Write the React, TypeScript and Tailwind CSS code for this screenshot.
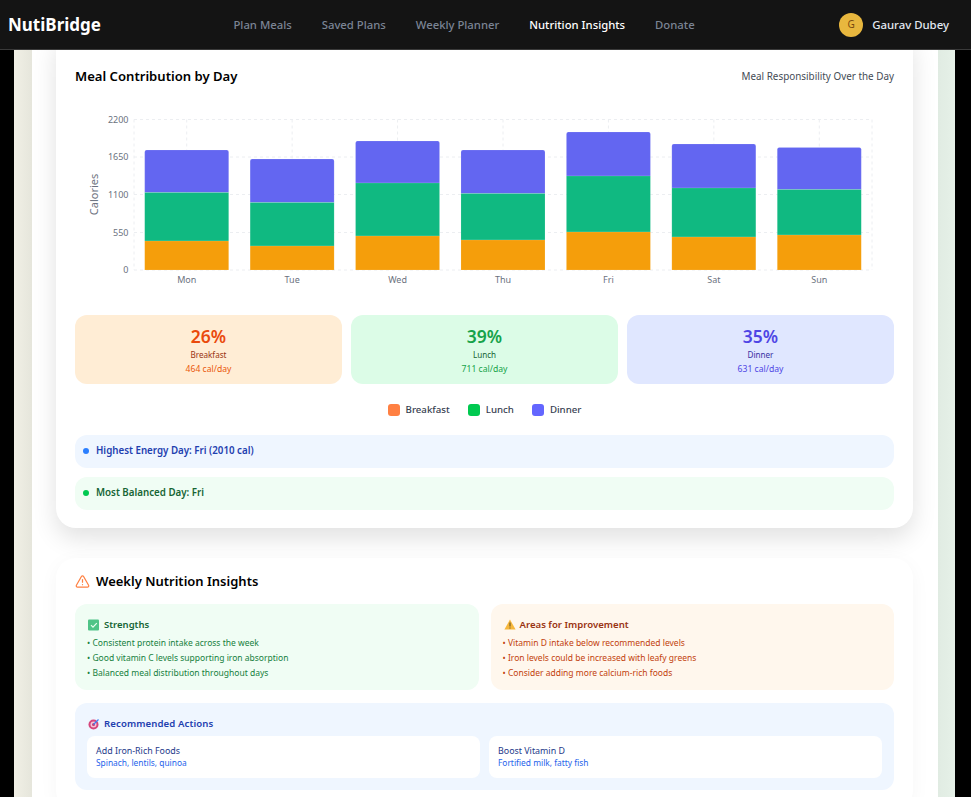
import { AlertTriangle } from "lucide-react";

const font = "[font-family:'Noto_Sans',sans-serif]";

const navLinks = ["Plan Meals", "Saved Plans", "Weekly Planner", "Nutrition Insights", "Donate"];

// top of dinner, lunch and breakfast segments, in chart coordinates
const bars = [
  { day: "Mon", dinner: 150, lunch: 192.5, breakfast: 241 },
  { day: "Tue", dinner: 159, lunch: 202.5, breakfast: 246 },
  { day: "Wed", dinner: 141, lunch: 183, breakfast: 236 },
  { day: "Thu", dinner: 150, lunch: 193.5, breakfast: 240 },
  { day: "Fri", dinner: 132, lunch: 176, breakfast: 232 },
  { day: "Sat", dinner: 144, lunch: 188, breakfast: 237 },
  { day: "Sun", dinner: 147.5, lunch: 189.5, breakfast: 235 },
];

const yTicks = [
  { label: "2200", y: 119.5 },
  { label: "1650", y: 157 },
  { label: "1100", y: 194.5 },
  { label: "550", y: 232.5 },
  { label: "0", y: 270 },
];

const Chart = () => {
  const top = 105;
  const left = 75;
  const band = 738 / 7;
  return (
    <svg width="819" height="190" viewBox={`${left} ${top} 819 190`} className="block">
      {yTicks.map((t) => (
        <g key={t.label}>
          <line x1="134" x2="872" y1={t.y} y2={t.y} stroke="#eceef1" strokeDasharray="3 3" />
          <text x="128.5" y={t.y + 3} textAnchor="end" fontSize="9" fill="#6b7280">{t.label}</text>
        </g>
      ))}
      <line x1="134" x2="134" y1="119.5" y2="270" stroke="#eceef1" strokeDasharray="3 3" />
      <line x1="872" x2="872" y1="119.5" y2="270" stroke="#eceef1" strokeDasharray="3 3" />
      <text x="0" y="0" transform="translate(98 194.5) rotate(-90)" textAnchor="middle" fontSize="11" fill="#6b7280">Calories</text>
      {bars.map((b, i) => {
        const x = 134 + band * i + 10.7;
        const cx = 134 + band * i + band / 2;
        return (
          <g key={b.day}>
            <line x1={cx} x2={cx} y1="119.5" y2="270" stroke="#eceef1" strokeDasharray="3 3" />
            <path d={`M${x} ${b.lunch}V${b.dinner + 2}q0-2 2-2h80q2 0 2 2V${b.lunch}z`} fill="#6366f1" stroke="#fff" strokeOpacity="0.2" strokeWidth="0.6" />
            <rect x={x} y={b.lunch} width="84" height={b.breakfast - b.lunch} fill="#10b981" stroke="#fff" strokeOpacity="0.2" strokeWidth="0.6" />
            <rect x={x} y={b.breakfast} width="84" height={270 - b.breakfast} fill="#f59e0b" stroke="#fff" strokeOpacity="0.2" strokeWidth="0.6" />
            <text x={cx} y="283" textAnchor="middle" fontSize="9" fill="#6b7280">{b.day}</text>
          </g>
        );
      })}
    </svg>
  );
};

const ShareCard = ({ pct, name, cal, bg, c1, c2, c3 }: { pct: string; name: string; cal: string; bg: string; c1: string; c2: string; c3: string }) => (
  <div className={`flex h-[69px] flex-col items-center rounded-xl pt-[9px] ${bg}`}>
    <span className={`text-[17.5px] leading-[24px] font-semibold ${c1}`}>{pct}</span>
    <span className={`text-[8.1px] leading-[13px] ${c2}`}>{name}</span>
    <span className={`text-[8.6px] leading-[16px] ${c3}`}>{cal}</span>
  </div>
);

const CheckEmoji = () => (
  <svg width="12" height="12" viewBox="0 0 12 12" className="shrink-0">
    <rect width="11" height="11" y="0.5" rx="1" fill="#4fc487" />
    <path d="M3 6.2l2 2 3.8-4" fill="none" stroke="#e8fff0" strokeWidth="1.2" />
  </svg>
);

const WarnEmoji = () => (
  <svg width="12" height="11" viewBox="0 0 12 11" className="shrink-0">
    <path d="M6 0.5L11.6 10.5H0.4z" fill="#f6b73c" />
    <path d="M6 3.5v4M6 8.5v1" stroke="#5b4a1e" strokeWidth="1" />
  </svg>
);

const TargetEmoji = () => (
  <svg width="12" height="12" viewBox="0 0 12 12" className="shrink-0">
    <circle cx="5.5" cy="6.5" r="5" fill="#d6457c" />
    <circle cx="5.5" cy="6.5" r="3" fill="#f4c4d6" />
    <circle cx="5.5" cy="6.5" r="1.5" fill="#c93a70" />
    <path d="M5.5 6.5L10.5 1.5" stroke="#3b82f6" strokeWidth="1.2" />
  </svg>
);

const App = () => {
  return (
    <div className={`flex h-[797px] flex-col overflow-hidden bg-black ${font}`}>
      <header className="flex h-[50px] shrink-0 items-center justify-between border-b border-[#3a3a3a] bg-[#141414] pr-[22px] pl-2">
        <span className="text-[17px] font-bold text-white">NutiBridge</span>
        <nav className="mr-3 flex gap-[30px] pt-px text-[11.3px] font-medium">
          {navLinks.map((l) => (
            <span key={l} className={l === "Nutrition Insights" ? "text-white" : "text-[#7b8494]"}>{l}</span>
          ))}
        </nav>
        <div className="flex items-center gap-[9px]">
          <span className="flex h-6 w-6 items-center justify-center rounded-full bg-[#e8b73e] text-[10px] text-[#7a4a10]">G</span>
          <span className="text-[11.4px] font-medium text-[#e2e8f0]">Gaurav Dubey</span>
        </div>
      </header>

      <div className="mr-4 ml-[14px] min-h-0 flex-1 bg-[linear-gradient(90deg,#f1f0e6,#e5e5db_2%,#e0ebe2_98%,#e6f1e8)] pr-[17px] pl-[18px]">
        <main className="h-full overflow-hidden bg-white pr-[25px] pl-6">
          <section className="-mt-5 rounded-[20px] bg-white px-[19px] pt-[37px] pb-[18px] shadow-[0_10px_25px_rgba(0,0,0,0.12)]">
            <div className="flex items-center justify-between">
              <h2 className="text-[13.1px] font-semibold text-black">Meal Contribution by Day</h2>
              <span className="text-[9.9px] text-[#444b55]">Meal Responsibility Over the Day</span>
            </div>
            <div className="mt-[18px]">
              <Chart />
            </div>
            <div className="mt-[20px] grid grid-cols-3 gap-[9px]">
              <ShareCard pct="26%" name="Breakfast" cal="464 cal/day" bg="bg-[#ffedd5]" c1="text-[#ea4a0c]" c2="text-[#9a3412]" c3="text-[#ea580c]" />
              <ShareCard pct="39%" name="Lunch" cal="711 cal/day" bg="bg-[#dcfce7]" c1="text-[#16a34a]" c2="text-[#166534]" c3="text-[#16a34a]" />
              <ShareCard pct="35%" name="Dinner" cal="631 cal/day" bg="bg-[#e0e7ff]" c1="text-[#4f46e5]" c2="text-[#3730a3]" c3="text-[#4f46e5]" />
            </div>
            <div className="mt-[19px] flex justify-center gap-[18px] text-[9.7px] font-medium text-[#374151]">
              <span className="flex items-center gap-[6px]"><i className="h-3 w-3 rounded-[3px] bg-[#ff8042]" />Breakfast</span>
              <span className="flex items-center gap-[6px]"><i className="h-3 w-3 rounded-[3px] bg-[#00c950]" />Lunch</span>
              <span className="flex items-center gap-[6px]"><i className="h-3 w-3 rounded-[3px] bg-[#6366ff]" />Dinner</span>
            </div>
            <div className="mt-[18px] flex flex-col gap-[9px]">
              <div className="flex h-[33px] items-center gap-[7px] rounded-xl bg-[#eff6ff] px-2 text-[9.75px] font-semibold text-[#1e40af]">
                <i className="-mt-px h-[6px] w-[6px] rounded-full bg-[#2b7fff]" />Highest Energy Day: Fri (2010 cal)
              </div>
              <div className="flex h-[33px] items-center gap-[7px] rounded-xl bg-[#f0fdf4] px-2 text-[9.75px] font-semibold text-[#166534]">
                <i className="-mt-px h-[6px] w-[6px] rounded-full bg-[#00c950]" />Most Balanced Day: Fri
              </div>
            </div>
          </section>

          <section className="mt-[30px] rounded-[20px] bg-white px-[19px] pt-[14px] pb-5 shadow-[0_4px_20px_rgba(0,0,0,0.04)]">
            <div className="flex items-center gap-[6px]">
              <AlertTriangle size={15} className="text-[#ff8042]" />
              <h2 className="text-[13px] font-semibold text-black">Weekly Nutrition Insights</h2>
            </div>
            <div className="mt-3 grid grid-cols-2 gap-3">
              <div className="h-[86px] rounded-xl bg-[#f0fdf4] px-3 pt-[14px]">
                <div className="flex items-center gap-[4px] pl-px text-[9.5px] font-semibold text-[#166534]"><CheckEmoji />Strengths</div>
                <ul className="mt-[3px] text-[8.5px] leading-[15px] text-[#15803d]">
                  <li>• Consistent protein intake across the week</li>
                  <li>• Good vitamin C levels supporting iron absorption</li>
                  <li>• Balanced meal distribution throughout days</li>
                </ul>
              </div>
              <div className="h-[86px] rounded-xl bg-[#fff7ed] px-3 pt-[14px]">
                <div className="flex items-center gap-[4px] pl-px text-[9.6px] font-semibold text-[#9a3412]"><WarnEmoji />Areas for Improvement</div>
                <ul className="mt-[3px] text-[8.5px] leading-[15px] text-[#c2410c]">
                  <li>• Vitamin D intake below recommended levels</li>
                  <li>• Iron levels could be increased with leafy greens</li>
                  <li>• Consider adding more calcium-rich foods</li>
                </ul>
              </div>
            </div>
            <div className="mt-[13px] rounded-xl bg-[#eff6ff] px-3 pt-[14px] pb-3">
              <div className="flex items-center gap-[4px] pl-px text-[9.6px] font-semibold tracking-[0.1px] text-[#1e40af]"><TargetEmoji />Recommended Actions</div>
              <div className="mt-[5px] grid grid-cols-2 gap-[9px]">
                <div className="h-[42px] rounded-lg bg-white px-[9px] pt-[9px] leading-[12px]">
                  <div className="text-[8.9px] text-[#1e3a8a]">Add Iron-Rich Foods</div>
                  <div className="text-[8.4px] text-[#2563eb]">Spinach, lentils, quinoa</div>
                </div>
                <div className="h-[42px] rounded-lg bg-white px-[9px] pt-[9px] leading-[12px]">
                  <div className="text-[8.9px] text-[#1e3a8a]">Boost Vitamin D</div>
                  <div className="text-[8.4px] text-[#2563eb]">Fortified milk, fatty fish</div>
                </div>
              </div>
            </div>
          </section>
        </main>
      </div>
    </div>
  );
};

export default App;
